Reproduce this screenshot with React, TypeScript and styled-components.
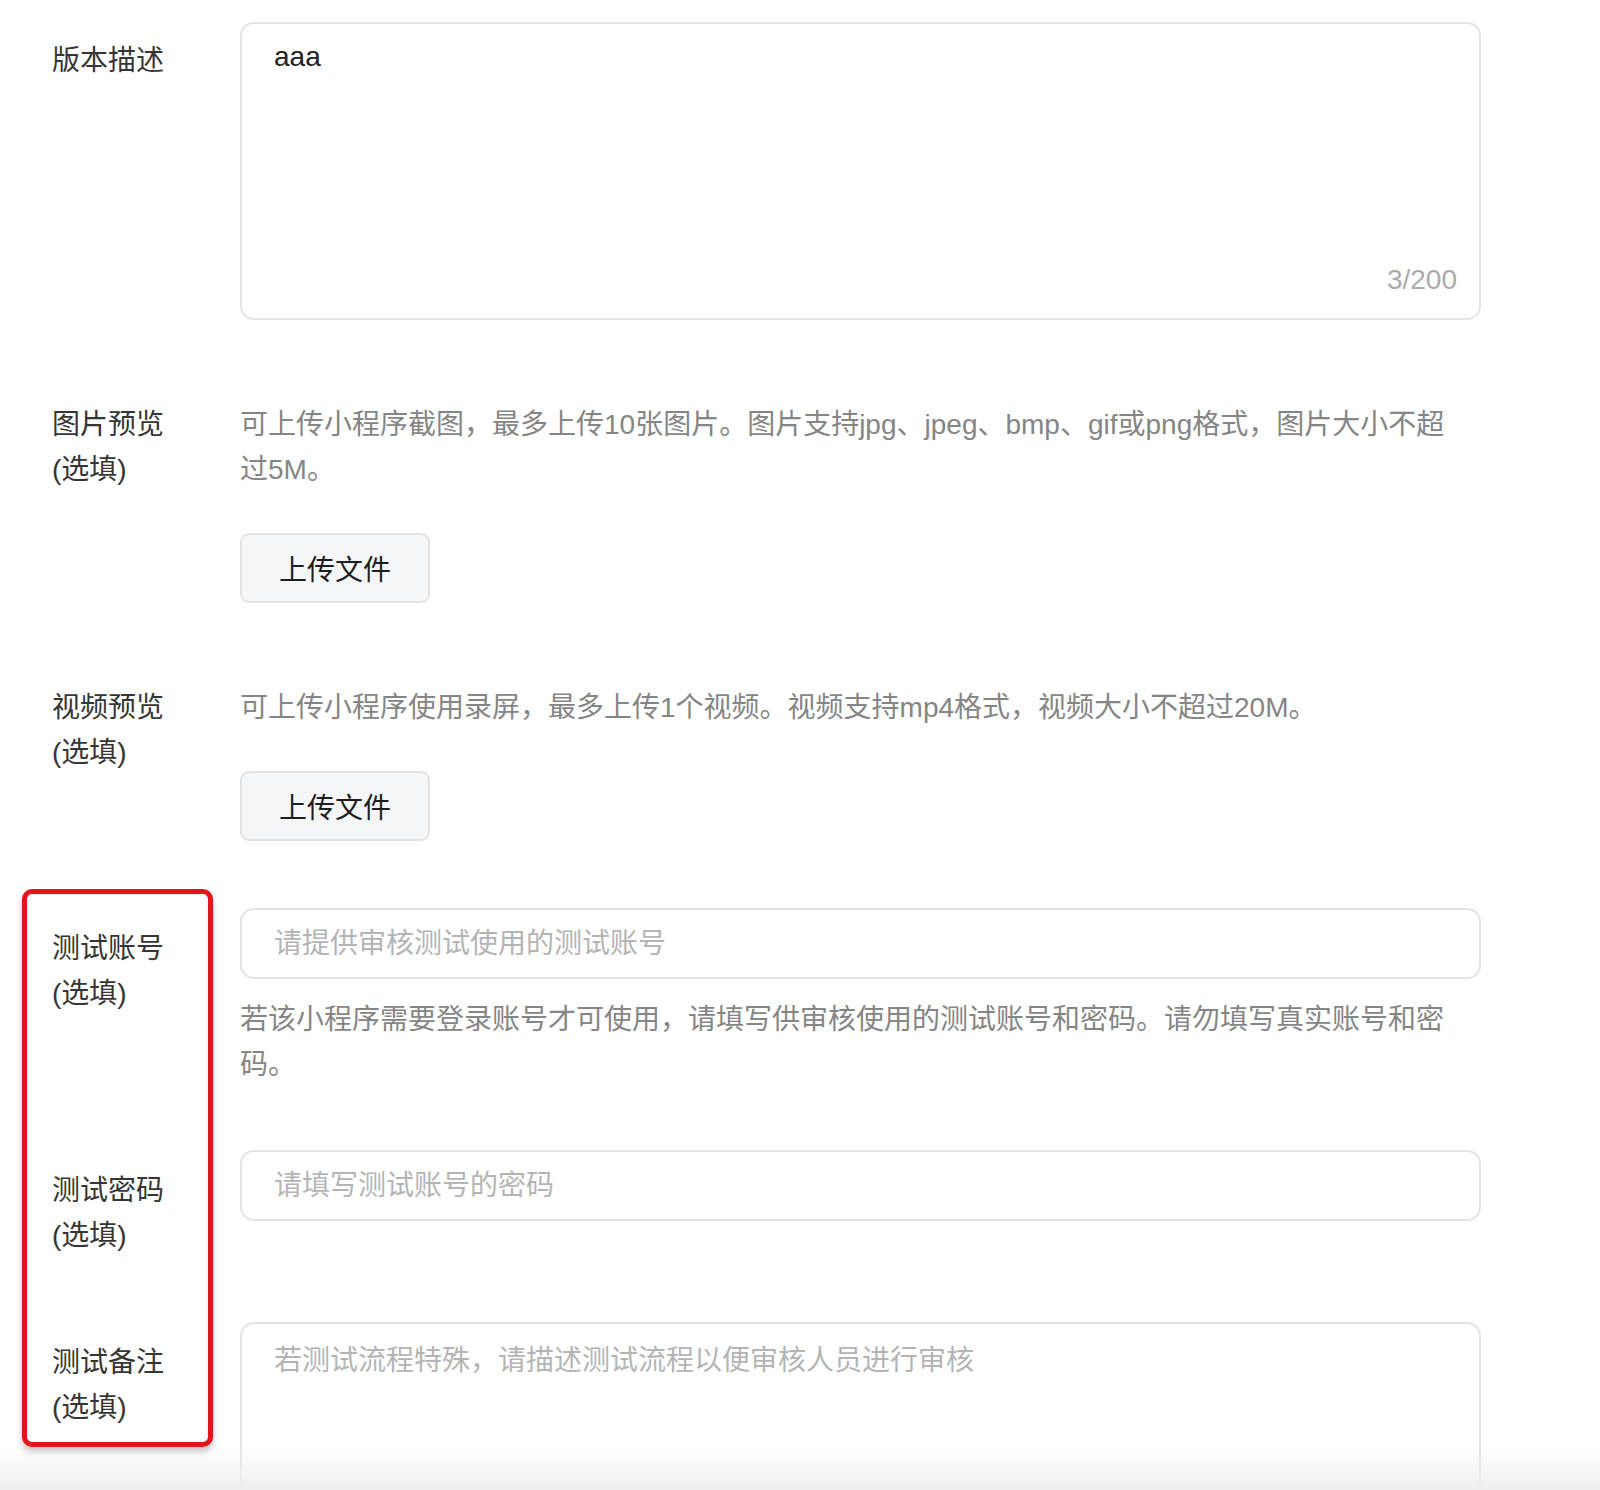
import React from "react";
import styled, { createGlobalStyle } from "styled-components";

const GlobalStyle = createGlobalStyle`
  html, body {
    margin: 0;
    padding: 0;
    background: #ffffff;
  }
  body {
    font-family: "Liberation Sans", "Noto Sans CJK SC", sans-serif;
    color: #353535;
    -webkit-font-smoothing: antialiased;
  }
  * { box-sizing: border-box; }
`;

const Page = styled.div`
  position: relative;
  width: 1600px;
  min-height: 1490px;
  padding: 22px 119px 0 52px;
  font-size: 28px;
  line-height: 45px;
`;

const Form = styled.div`
  display: flex;
  flex-direction: column;
`;

const Row = styled.div<{ $gap: number }>`
  display: grid;
  grid-template-columns: 188px 1fr;
  margin-bottom: ${(p) => p.$gap}px;
`;

const Label = styled.div<{ $offset: number }>`
  padding-top: ${(p) => p.$offset}px;
  color: #353535;
  font-size: 28px;
  line-height: 45px;
  white-space: nowrap;
`;

const Content = styled.div`
  display: flex;
  flex-direction: column;
  align-items: flex-start;
  min-width: 0;
`;

const AreaBox = styled.div<{ $height: number }>`
  position: relative;
  width: 100%;
  height: ${(p) => p.$height}px;
  border: 2px solid #e4e4e4;
  border-radius: 14px;
  background: #fff;
`;

const Area = styled.textarea<{ $padTop: number }>`
  display: block;
  width: 100%;
  height: 100%;
  border: none;
  outline: none;
  resize: none;
  background: transparent;
  padding: ${(p) => p.$padTop}px 32px 0 32px;
  font-family: inherit;
  font-size: 28px;
  line-height: 45px;
  color: #222;
  &::placeholder {
    color: #b4b4b4;
  }
`;

const Counter = styled.span`
  position: absolute;
  right: 22px;
  bottom: 16px;
  font-size: 28px;
  line-height: 45px;
  color: #ababab;
`;

const Hint = styled.p<{ $top?: number }>`
  margin: ${(p) => p.$top ?? 0}px 0 0 0;
  color: #858585;
  font-size: 28px;
  line-height: 45px;
  width: 100%;
  max-width: 1224px;
`;

const UploadButton = styled.button<{ $top: number }>`
  margin-top: ${(p) => p.$top}px;
  width: 190px;
  height: 70px;
  border: 2px solid #e2e2e2;
  border-radius: 9px;
  background: #f5f6f8;
  color: #1e1e1e;
  font-family: inherit;
  font-size: 28px;
  cursor: pointer;
  padding: 0;
`;

const Input = styled.input`
  width: 100%;
  height: 71px;
  border: 2px solid #e4e4e4;
  border-radius: 14px;
  padding: 0 32px;
  outline: none;
  font-family: inherit;
  font-size: 28px;
  color: #222;
  background: #fff;
  &::placeholder {
    color: #b4b4b4;
  }
`;

const Highlight = styled.div`
  position: absolute;
  left: 22px;
  top: 889px;
  width: 191px;
  height: 558px;
  border: 5px solid #e3141b;
  border-radius: 10px;
  box-shadow: 0 5px 6px rgba(0, 0, 0, 0.22), inset 0 0 3px rgba(0, 0, 0, 0.12);
  pointer-events: none;
`;

const BottomFade = styled.div`
  position: fixed;
  left: 0;
  right: 0;
  bottom: 0;
  height: 42px;
  background: linear-gradient(rgba(240, 240, 240, 0), #eeeeee);
  pointer-events: none;
`;

export default function App() {
  return (
    <>
      <GlobalStyle />
      <Page>
        <Form>
          <Row $gap={82}>
            <Label $offset={16}>版本描述</Label>
            <Content>
              <AreaBox $height={298}>
                <Area $padTop={10} defaultValue="aaa" />
                <Counter>3/200</Counter>
              </AreaBox>
            </Content>
          </Row>

          <Row $gap={82}>
            <Label $offset={0}>
              图片预览
              <br />
              (选填)
            </Label>
            <Content>
              <Hint>
                可上传小程序截图，最多上传10张图片。图片支持jpg、jpeg、bmp、gif或png格式，图片大小不超过5M。
              </Hint>
              <UploadButton $top={41}>上传文件</UploadButton>
            </Content>
          </Row>

          <Row $gap={67}>
            <Label $offset={0}>
              视频预览
              <br />
              (选填)
            </Label>
            <Content>
              <Hint>可上传小程序使用录屏，最多上传1个视频。视频支持mp4格式，视频大小不超过20M。</Hint>
              <UploadButton $top={41}>上传文件</UploadButton>
            </Content>
          </Row>

          <Row $gap={63}>
            <Label $offset={18}>
              测试账号
              <br />
              (选填)
            </Label>
            <Content>
              <Input placeholder="请提供审核测试使用的测试账号" />
              <Hint $top={18}>
                若该小程序需要登录账号才可使用，请填写供审核使用的测试账号和密码。请勿填写真实账号和密码。
              </Hint>
            </Content>
          </Row>

          <Row $gap={64}>
            <Label $offset={18}>
              测试密码
              <br />
              (选填)
            </Label>
            <Content>
              <Input placeholder="请填写测试账号的密码" />
            </Content>
          </Row>

          <Row $gap={0}>
            <Label $offset={18}>
              测试备注
              <br />
              (选填)
            </Label>
            <Content>
              <AreaBox $height={300}>
                <Area $padTop={14} placeholder="若测试流程特殊，请描述测试流程以便审核人员进行审核" />
              </AreaBox>
            </Content>
          </Row>
        </Form>
        <Highlight />
      </Page>
      <BottomFade />
    </>
  );
}
